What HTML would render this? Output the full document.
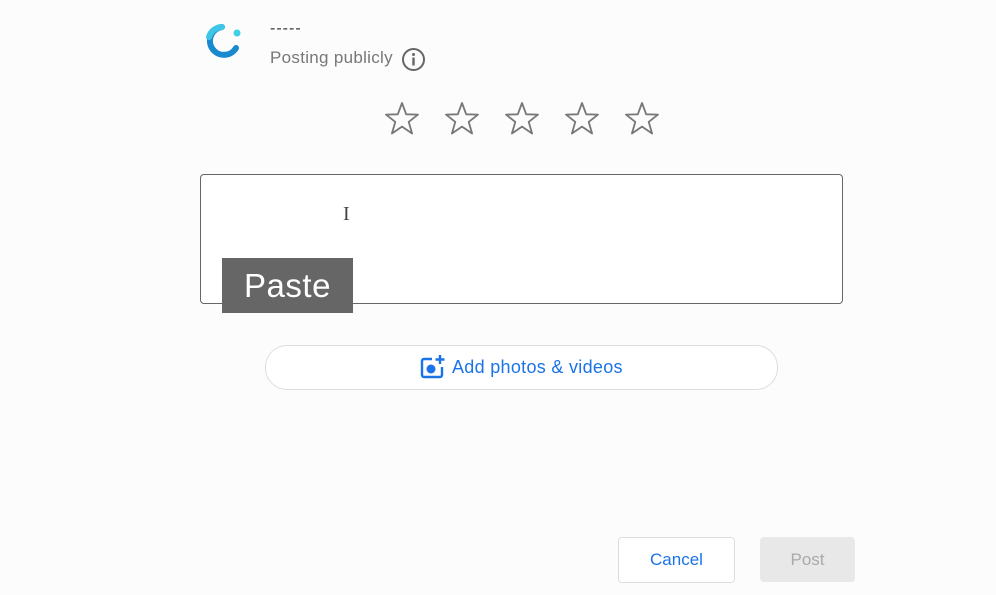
<!DOCTYPE html>
<html><head><style>
body{margin:0;width:996px;height:595px;background:#fcfcfc;font-family:"Liberation Sans",sans-serif;position:relative;overflow:hidden}
.a{position:absolute}
</style></head><body>
<svg class="a" style="left:205px;top:22px" width="40" height="40" viewBox="0 0 40 40">
<path d="M17 5 A14 14 0 1 0 31 26" fill="none" stroke="#1a8ad0" stroke-width="6" stroke-linecap="round"/>
<path d="M17 5 A14 14 0 0 0 4 15" fill="none" stroke="#3fc6e6" stroke-width="6" stroke-linecap="round"/>
<circle cx="32" cy="11" r="3.5" fill="#3fd0e8"/>
</svg>
<div class="a" style="left:270px;top:20px;font-size:16px;color:#333;letter-spacing:1px">-----</div>
<div class="a" style="left:270px;top:48px;font-size:17px;color:#777;letter-spacing:0.3px">Posting publicly</div>
<svg class="a" style="left:401px;top:47px" width="25" height="25" viewBox="0 0 25 25"><circle cx="12.5" cy="12.5" r="10.5" fill="none" stroke="#666" stroke-width="2"/><rect x="11.3" y="10.5" width="2.4" height="8" fill="#666"/><circle cx="12.5" cy="7.5" r="1.5" fill="#666"/></svg>
<svg class="a" style="left:383px;top:100px" width="280" height="40" viewBox="0 0 280 40">
<g fill="none" stroke="#777" stroke-width="1.8" stroke-linejoin="round">
<path id="s" d="M19 3 L23.2 14.3 L35 14.6 L25.7 21.9 L29.1 33.5 L19 26.6 L8.9 33.5 L12.3 21.9 L3 14.6 L14.8 14.3 Z"/>
<use href="#s" x="60"/><use href="#s" x="120"/><use href="#s" x="180"/><use href="#s" x="240"/>
</g></svg>
<div class="a" style="left:200px;top:174px;width:641px;height:128px;border:1.5px solid #666;border-radius:4px;background:#fff"></div>
<div class="a" style="left:343px;top:203px;font-size:20px;color:#444;font-family:'Liberation Serif',serif">I</div>
<div class="a" style="left:222px;top:258px;width:131px;height:55px;background:#666;color:#fff;font-size:33px;line-height:55px;text-align:center;letter-spacing:0.5px">Paste</div>
<div class="a" style="left:265px;top:345px;width:511px;height:43px;border:1px solid #ddd;border-radius:22px;background:#fff"></div>
<svg class="a" style="left:418px;top:354px" width="28" height="26" viewBox="0 0 28 26"><path d="M14 5 H6 a2 2 0 0 0 -2 2 V21 a2 2 0 0 0 2 2 H22 a2 2 0 0 0 2 -2 V13" fill="none" stroke="#1a73e8" stroke-width="2.4"/><circle cx="13" cy="15" r="4.5" fill="#1a73e8"/><path d="M22 1 V10 M17.5 5.5 H26.5" stroke="#1a73e8" stroke-width="2.4"/></svg>
<div class="a" style="left:452px;top:357px;font-size:18px;color:#1a73e8;letter-spacing:0.3px">Add photos &amp; videos</div>
<div class="a" style="left:618px;top:537px;width:115px;height:44px;border:1px solid #ddd;border-radius:4px;background:#fff;color:#1a73e8;font-size:17px;line-height:44px;text-align:center">Cancel</div>
<div class="a" style="left:760px;top:537px;width:95px;height:45px;border-radius:4px;background:#e8e8e8;color:#aaa;font-size:17px;line-height:45px;text-align:center">Post</div>
</body></html>
